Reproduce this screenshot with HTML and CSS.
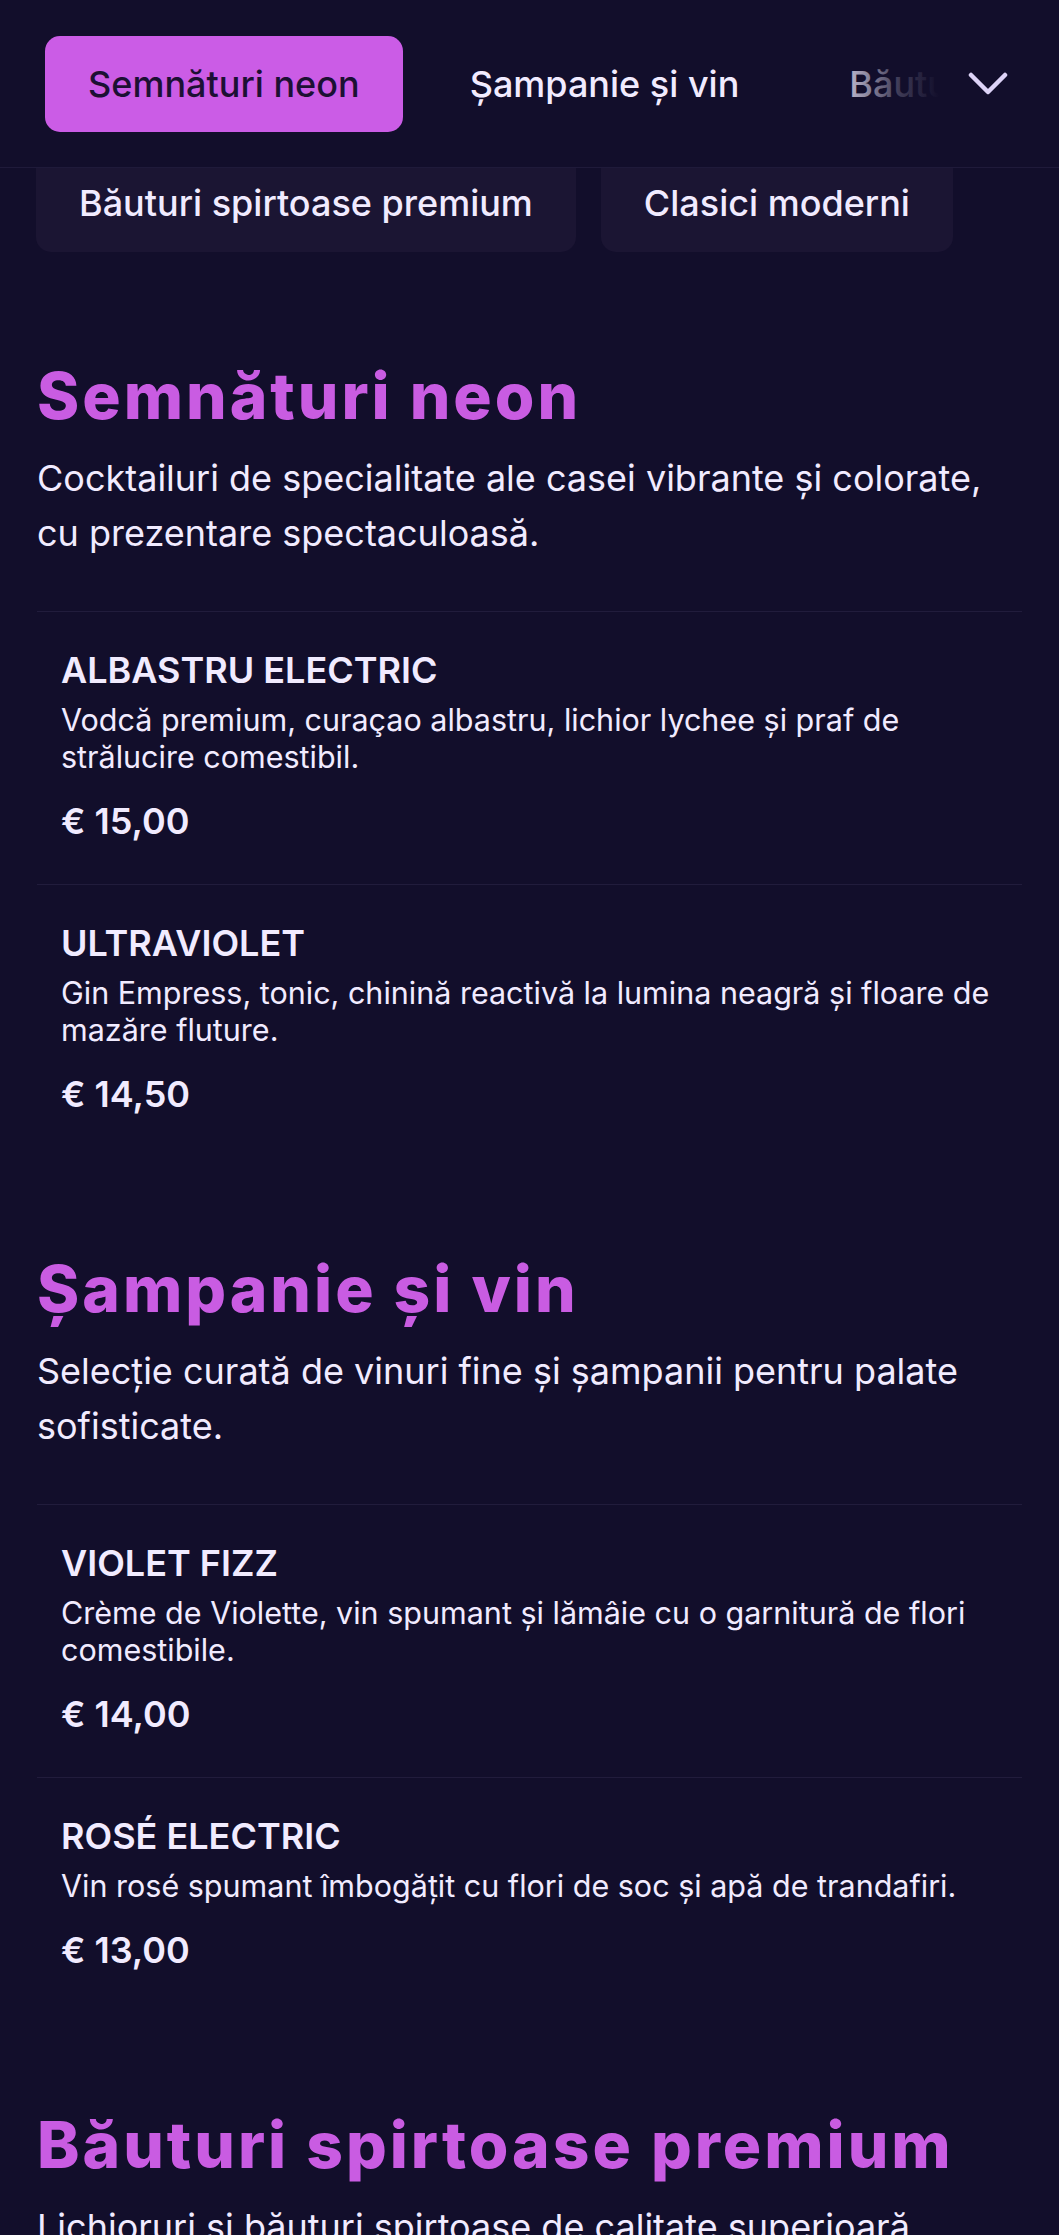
FILE: index.html
```html
<!DOCTYPE html>
<html lang="ro">
<head>
<meta charset="utf-8">
<title>Meniu bar</title>
<link rel="stylesheet" href="styles.css">
</head>
<body>
<header class="topbar">
  <nav class="tabs">
    <a class="tab tab-active">Semnături neon</a>
    <a class="tab">Șampanie și vin</a>
    <a class="tab">Băuturi spirtoase premium</a>
    <a class="tab">Clasici moderni</a>
  </nav>
  <div class="tabs-fade">
    <svg class="chevron" viewBox="0 0 40 24" width="40" height="24" aria-hidden="true">
      <path d="M3 3 L20 20 L37 3" fill="none" stroke="currentColor" stroke-width="4.5" stroke-linecap="round" stroke-linejoin="round"/>
    </svg>
  </div>
</header>

<div class="chips">
  <span class="chip">Băuturi spirtoase premium</span>
  <span class="chip">Clasici moderni</span>
</div>

<main class="menu">
  <section class="category">
    <h2 class="category-title">Semnături neon</h2>
    <p class="category-desc">Cocktailuri de specialitate ale casei vibrante și colorate, cu prezentare spectaculoasă.</p>
    <ul class="items">
      <li class="item">
        <h3 class="item-name">ALBASTRU ELECTRIC</h3>
        <p class="item-desc">Vodcă premium, curaçao albastru, lichior lychee și praf de strălucire comestibil.</p>
        <p class="item-price">€ 15,00</p>
      </li>
      <li class="item">
        <h3 class="item-name">ULTRAVIOLET</h3>
        <p class="item-desc">Gin Empress, tonic, chinină reactivă la lumina neagră și floare de mazăre fluture.</p>
        <p class="item-price">€ 14,50</p>
      </li>
    </ul>
  </section>

  <section class="category">
    <h2 class="category-title">Șampanie și vin</h2>
    <p class="category-desc">Selecție curată de vinuri fine și șampanii pentru palate sofisticate.</p>
    <ul class="items">
      <li class="item">
        <h3 class="item-name">VIOLET FIZZ</h3>
        <p class="item-desc">Crème de Violette, vin spumant și lămâie cu o garnitură de flori comestibile.</p>
        <p class="item-price">€ 14,00</p>
      </li>
      <li class="item">
        <h3 class="item-name">ROSÉ ELECTRIC</h3>
        <p class="item-desc">Vin rosé spumant îmbogățit cu flori de soc și apă de trandafiri.</p>
        <p class="item-price">€ 13,00</p>
      </li>
    </ul>
  </section>

  <section class="category">
    <h2 class="category-title">Băuturi spirtoase premium</h2>
    <p class="category-desc">Lichioruri și băuturi spirtoase de calitate superioară, servite simplu sau pe gheață.</p>
  </section>
</main>
</body>
</html>
```

FILE: styles.css
```css
* {
  box-sizing: border-box;
}

html, body {
  margin: 0;
  padding: 0;
}

body {
  background: #120e2b;
  color: #f1ebff;
  font-family: "Inter", "Noto Sans", sans-serif;
}

.topbar {
  position: relative;
  height: 168px;
  background: #120e2b;
  border-bottom: 1px solid #1f1a3a;
  overflow: hidden;
}

.tabs {
  display: flex;
  align-items: center;
  gap: 24px;
  height: 100%;
  padding-left: 45px;
  white-space: nowrap;
}

.tab {
  display: flex;
  align-items: center;
  height: 96px;
  padding: 0 43px;
  border-radius: 15px;
  font-size: 36px;
  font-weight: 500;
  color: #f1ebff;
  flex: none;
}

.tab-active {
  background: #cb5ce6;
  color: #1c1034;
}

.tabs-fade {
  position: absolute;
  top: 0;
  right: 0;
  bottom: 0;
  width: 250px;
  display: flex;
  align-items: center;
  justify-content: flex-end;
  padding-right: 51px;
  background: linear-gradient(to right, rgba(18, 14, 43, 0) 0%, rgba(18, 14, 43, 0.3) 18%, rgba(18, 14, 43, 0.8) 36%, #120e2b 52%);
}

.chevron {
  color: #ddd3f7;
  display: block;
}

.chips {
  display: flex;
  gap: 25px;
  padding: 0 36px;
  margin-bottom: 12px;
}

.chip {
  height: 84px;
  padding: 14px 43px 0;
  line-height: 42px;
  font-size: 36px;
  font-weight: 500;
  color: #f1ebff;
  background: #1b1533;
  border-radius: 0 0 15px 15px;
  white-space: nowrap;
}

.menu {
  padding: 0 37px;
}

.category {
  padding-top: 93px;
}

.category-title {
  margin: 0 0 17px;
  font-size: 64px;
  line-height: 77px;
  font-weight: 800;
  color: #c95ce2;
  letter-spacing: 3px;
}

.category-desc {
  margin: 0;
  font-size: 36px;
  line-height: 55px;
  font-weight: 400;
}

.items {
  list-style: none;
  margin: 50px 0 0;
  padding: 0;
}

.item {
  border-top: 1px solid #211c3c;
  padding: 38px 24px 43px;
}

.item-name {
  margin: 0 0 11px;
  font-size: 36px;
  line-height: 40px;
  font-weight: 600;
}

.item-desc {
  margin: 0;
  font-size: 30.5px;
  line-height: 37px;
  font-weight: 400;
}

.item-price {
  margin: 26px 0 0;
  font-size: 36px;
  line-height: 40px;
  font-weight: 600;
}
```
